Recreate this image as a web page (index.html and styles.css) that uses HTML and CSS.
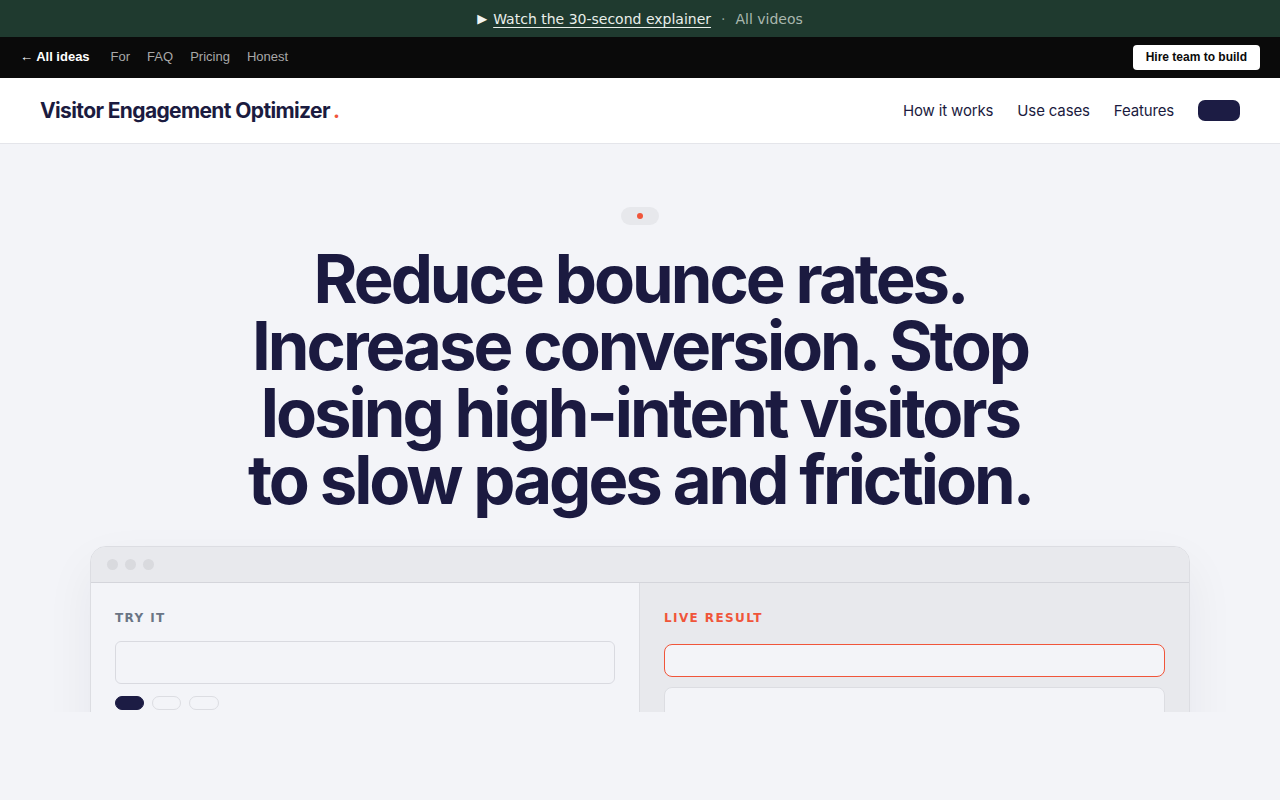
FILE: index.html
```html
<!DOCTYPE html>
<html lang="en">
  <head>
    <meta charset="UTF-8" />
    <meta name="viewport" content="width=device-width, initial-scale=1.0" />
    <title>Visitor Engagement Optimizer</title>
    <link rel="stylesheet" href="styles.css">
  </head>
  <body>
    <div class="promo">
      <span class="play">&#9654;</span>
      <a href="#" class="promo-link">Watch the 30-second explainer</a>
      <span class="sep">&middot;</span>
      <a href="#" class="promo-muted">All videos</a>
    </div>

    <div class="topbar">
      <nav class="topbar-links">
        <a href="#" class="back">&larr; All ideas</a>
        <a href="#">For</a>
        <a href="#">FAQ</a>
        <a href="#">Pricing</a>
        <a href="#">Honest</a>
      </nav>
      <a href="#" class="hire">Hire team to build</a>
    </div>

    <header class="header">
      <div class="logo">Visitor Engagement Optimizer<span class="dot">.</span></div>
      <nav class="main-nav">
        <a href="#">How it works</a>
        <a href="#">Use cases</a>
        <a href="#">Features</a>
        <button class="cta"></button>
      </nav>
    </header>

    <section class="hero">
      <div class="badge"><span class="badge-dot"></span></div>
      <h1 class="headline">Reduce bounce rates.<br>Increase conversion. Stop<br>losing high-intent visitors<br>to slow pages and friction.</h1>

      <div class="window">
        <div class="window-bar">
          <span></span><span></span><span></span>
        </div>
        <div class="window-body">
          <div class="pane pane-input">
            <div class="pane-label">TRY IT</div>
            <div class="field"></div>
            <div class="chips">
              <span class="chip active"></span>
              <span class="chip"></span>
              <span class="chip"></span>
            </div>
          </div>
          <div class="pane pane-result">
            <div class="pane-label accent">LIVE RESULT</div>
            <div class="result result-main"></div>
            <div class="result"></div>
          </div>
        </div>
      </div>
    </section>
  </body>
</html>
```

FILE: styles.css
```css
body {
  margin: 0;
  padding: 0;
  background-color: #f3f4f8;
  font-family: Inter, "Noto Sans", sans-serif;
  color: #1b1b40;
}
a {
  text-decoration: none;
}

/* promo strip */
.promo {
  height: 37px;
  background-color: #1f3a2f;
  display: flex;
  justify-content: center;
  align-items: center;
  gap: 8px;
  font-family: "DejaVu Sans", sans-serif;
  font-size: 14px;
}
.play {
  color: #f1f4f1;
  font-size: 13px;
  margin-right: -2px;
}
.promo-link {
  color: #e9efea;
  text-decoration: underline;
  text-underline-offset: 3px;
}
.sep {
  color: #8fa497;
  margin: 0 2px;
}
.promo-muted {
  color: #a9b7ae;
}

/* dark top bar */
.topbar {
  height: 41px;
  background-color: #0a0a0a;
  display: flex;
  justify-content: space-between;
  align-items: center;
  padding: 0 20px;
  font-family: "Liberation Sans", Arial, sans-serif;
  font-size: 13px;
}
.topbar-links {
  display: flex;
  gap: 17px;
  margin-top: -2px;
}
.topbar-links a {
  color: #a8a8a8;
}
.topbar-links .back {
  color: #fff;
  font-weight: bold;
  margin-right: 4px;
}
.hire {
  background-color: #fff;
  color: #0a0a0a;
  font-weight: bold;
  font-size: 12px;
  padding: 5px 13px 6px;
  border-radius: 4px;
  margin-top: -1px;
}

/* site header */
.header {
  height: 65px;
  background-color: #fff;
  border-bottom: 1px solid #e4e5ea;
  display: flex;
  justify-content: space-between;
  align-items: center;
  padding: 0 40px;
}
.logo {
  font-size: 21px;
  font-weight: 700;
  letter-spacing: -0.03em;
  color: #1b1b40;
}
.dot {
  color: #f0553a;
  margin-left: 3px;
}
.main-nav {
  display: flex;
  align-items: center;
  gap: 24px;
}
.main-nav a {
  color: #1b1b40;
  font-size: 15px;
  letter-spacing: -0.01em;
}
.cta {
  width: 42px;
  height: 21px;
  border: none;
  border-radius: 7px;
  background-color: #1c1c44;
}

/* hero */
.hero {
  height: 568px;
  overflow: hidden;
  display: flex;
  flex-direction: column;
  align-items: center;
  padding-top: 63px;
  box-sizing: border-box;
}
.badge {
  width: 38px;
  height: 18px;
  flex-shrink: 0;
  border-radius: 9px;
  background-color: #e7e8ec;
  display: flex;
  justify-content: center;
  align-items: center;
}
.badge-dot {
  width: 6px;
  height: 6px;
  border-radius: 50%;
  background-color: #f0553a;
}
.headline {
  margin: 20px 0 0;
  font-size: 67px;
  font-weight: 700;
  line-height: 67px;
  letter-spacing: -0.045em;
  text-align: center;
  color: #1b1a40;
}

/* demo window */
.window {
  width: 1100px;
  box-sizing: border-box;
  margin-top: 33px;
  border: 1px solid #dcdde2;
  border-radius: 16px;
  overflow: hidden;
  box-shadow: 0 20px 50px rgba(20, 20, 50, 0.06);
  background-color: #f3f4f8;
  flex-shrink: 0;
}
.window-bar {
  height: 35px;
  background-color: #e8e9ed;
  border-bottom: 1px solid #d4d5db;
  display: flex;
  align-items: center;
  gap: 7px;
  padding-left: 16px;
}
.window-bar span {
  width: 11px;
  height: 11px;
  border-radius: 50%;
  background-color: #d9dade;
}
.window-body {
  display: grid;
  grid-template-columns: 1fr 1fr;
  height: 300px;
}
.pane {
  padding: 28px 24px;
}
.pane-input {
  background-color: #f3f4f8;
  border-right: 1px solid #dcdde2;
}
.pane-result {
  background-color: #e8e9ed;
}
.pane-label {
  font-family: "DejaVu Sans", sans-serif;
  font-size: 12px;
  font-weight: bold;
  letter-spacing: 1.4px;
  color: #6a7585;
  margin-bottom: 16px;
}
.pane-label.accent {
  color: #f0553a;
  margin-bottom: 19px;
}
.field {
  height: 41px;
  border: 1px solid #d9dae0;
  border-radius: 6px;
  background-color: #f3f4f8;
}
.chips {
  display: flex;
  gap: 8px;
  margin-top: 12px;
}
.chip {
  width: 27px;
  height: 12px;
  border: 1px solid #dcdde2;
  border-radius: 8px;
}
.chip.active {
  background-color: #1c1c44;
  border-color: #1c1c44;
}
.chip:last-child {
  width: 28px;
}
.result {
  height: 60px;
  border: 1px solid #dcdde2;
  border-radius: 8px;
  background-color: #f3f4f8;
}
.result-main {
  height: 31px;
  border-color: #f0553a;
  margin-bottom: 10px;
}
```
